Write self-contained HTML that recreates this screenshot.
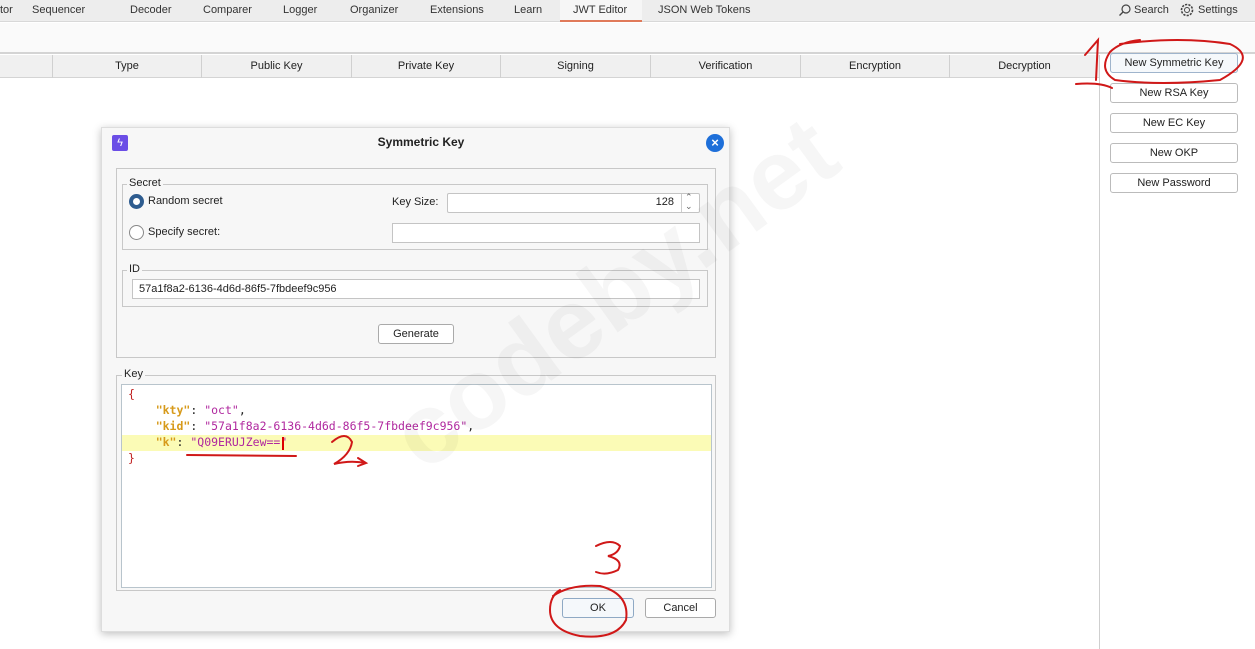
<!DOCTYPE html>
<html><head><meta charset="utf-8"><style>
*{box-sizing:border-box;margin:0;padding:0}
body{width:1255px;height:649px;position:relative;overflow:hidden;background:#fff;font-family:"Liberation Sans","DejaVu Sans",sans-serif;font-size:11px;color:#222}
.a{position:absolute}
.tab{position:absolute;top:0;height:21px;line-height:20px;font-size:11px;color:#333}
.th{position:absolute;top:55px;height:23px;line-height:23px;text-align:center;border-left:1px solid #d0d0d0;font-size:11px}
.btn{position:absolute;left:1110px;width:128px;height:20px;border:1px solid #bbb;border-radius:3px;background:#fff;text-align:center;line-height:18px;font-size:11px}
.grp{position:absolute;border:1px solid #c8c8c8}
.lbl{position:absolute;background:#f7f7f7;padding:0 2px;font-size:11px}
.in{position:absolute;border:1px solid #c4c4c4;background:#fff;border-radius:2px}
.mono{font-family:"DejaVu Sans Mono","Liberation Mono",monospace;font-size:11.5px}
</style></head><body>
<div class="a" style="left:0;top:0;width:1255px;height:22px;background:#ededed;border-bottom:1px solid #d8d8d8"></div>
<div class="tab" style="left:0">tor</div>
<div class="tab" style="left:32px">Sequencer</div>
<div class="tab" style="left:130px">Decoder</div>
<div class="tab" style="left:203px">Comparer</div>
<div class="tab" style="left:283px">Logger</div>
<div class="tab" style="left:350px">Organizer</div>
<div class="tab" style="left:430px">Extensions</div>
<div class="tab" style="left:514px">Learn</div>
<div class="a" style="left:560px;top:0;width:82px;height:22px;background:#f6f6f6;border-bottom:2px solid #e07a5a"></div>
<div class="tab" style="left:573px">JWT Editor</div>
<div class="tab" style="left:658px">JSON Web Tokens</div>
<svg class="a" style="left:1118px;top:3px" width="14" height="14"><circle cx="8" cy="6" r="4" fill="none" stroke="#444" stroke-width="1.2"/><path d="M5 9 L1.5 12.5" stroke="#444" stroke-width="1.3"/></svg>
<div class="tab" style="left:1134px">Search</div>
<svg class="a" style="left:1179px;top:2px" width="16" height="16"><circle cx="8" cy="8" r="2.5" fill="none" stroke="#444"/><circle cx="8" cy="8" r="5.5" fill="none" stroke="#444" stroke-dasharray="2.2 1.2" stroke-width="1.6"/></svg>
<div class="tab" style="left:1198px">Settings</div>
<div class="a" style="left:0;top:23px;width:1255px;height:31px;background:#fafafa;border-bottom:2px solid #d4d4d4"></div>
<div class="a" style="left:0;top:55px;width:1099px;height:23px;background:#f0f0f0;border-bottom:1px solid #d4d4d4"></div>
<div class="th" style="left:52px;width:149px">Type</div>
<div class="th" style="left:201px;width:150px">Public Key</div>
<div class="th" style="left:351px;width:149px">Private Key</div>
<div class="th" style="left:500px;width:150px">Signing</div>
<div class="th" style="left:650px;width:150px">Verification</div>
<div class="th" style="left:800px;width:149px">Encryption</div>
<div class="th" style="left:949px;width:150px">Decryption</div>
<div class="a" style="left:1099px;top:55px;width:1px;height:594px;background:#cfcfcf"></div>
<div class="btn" style="top:53px;border-color:#9fb4cc;background:#f5f8fb">New Symmetric Key</div>
<div class="btn" style="top:83px">New RSA Key</div>
<div class="btn" style="top:113px">New EC Key</div>
<div class="btn" style="top:143px">New OKP</div>
<div class="btn" style="top:173px">New Password</div>

<!-- dialog -->
<div class="a" style="left:101px;top:127px;width:629px;height:505px;background:#f7f7f7;border:1px solid #ddd;box-shadow:0 2px 8px rgba(0,0,0,.25)"></div>
<div class="a" style="left:112px;top:135px;width:16px;height:16px;background:#6b4ee6;border-radius:2px;color:#fff;font-size:11px;text-align:center;line-height:16px">ϟ</div>
<div class="a" style="left:101px;top:135px;width:640px;text-align:center;font-weight:bold;font-size:12px">Symmetric Key</div>
<div class="a" style="left:706px;top:134px;width:18px;height:18px;border-radius:50%;background:#1e6fd9;color:#fff;text-align:center;line-height:17px;font-weight:bold;font-size:13px">×</div>
<div class="grp" style="left:116px;top:168px;width:600px;height:190px"></div>
<div class="grp" style="left:122px;top:184px;width:586px;height:66px"></div>
<div class="lbl" style="left:127px;top:177px">Secret</div>
<div class="a" style="left:129px;top:194px;width:15px;height:15px;border-radius:50%;background:#2e5c8f"></div>
<div class="a" style="left:133px;top:198px;width:7px;height:7px;border-radius:50%;background:#fff"></div>
<div class="a" style="left:148px;top:195px">Random secret</div>
<div class="a" style="left:129px;top:225px;width:15px;height:15px;border-radius:50%;border:1px solid #888;background:#fff"></div>
<div class="a" style="left:148px;top:226px">Specify secret:</div>
<div class="a" style="left:392px;top:196px">Key Size:</div>
<div class="in" style="left:447px;top:193px;width:253px;height:20px"></div>
<div class="a" style="left:681px;top:194px;width:1px;height:18px;background:#ccc"></div>
<div class="a" style="left:600px;top:196px;width:74px;text-align:right">128</div>
<div class="a" style="left:685px;top:193px;font-size:9px;line-height:9px;color:#666">⌃<br>⌄</div>
<div class="in" style="left:392px;top:223px;width:308px;height:20px;border-radius:0"></div>
<div class="grp" style="left:122px;top:270px;width:586px;height:37px"></div>
<div class="lbl" style="left:127px;top:263px">ID</div>
<div class="in" style="left:132px;top:279px;width:568px;height:20px;border-radius:0"></div>
<div class="a" style="left:139px;top:283px">57a1f8a2-6136-4d6d-86f5-7fbdeef9c956</div>
<div class="a" style="left:378px;top:324px;width:76px;height:20px;border:1px solid #aaa;border-radius:3px;background:#fff;text-align:center;line-height:18px">Generate</div>
<div class="grp" style="left:116px;top:375px;width:600px;height:216px"></div>
<div class="lbl" style="left:122px;top:368px">Key</div>
<div class="a" style="left:121px;top:384px;width:591px;height:204px;background:#fff;border:1px solid #b8c4cc"></div>
<div class="a" style="left:122px;top:435px;width:589px;height:16px;background:#fbfbb6"></div>
<div class="a mono" style="left:128px;top:386px;line-height:16px;white-space:pre;color:#c02020">{
<span style="color:#222">    </span><b style="color:#d79a1a">"kty"</b><span style="color:#222">: </span><span style="color:#b0289f">"oct"</span><span style="color:#222">,</span>
<span>    </span><b style="color:#d79a1a">"kid"</b><span style="color:#222">: </span><span style="color:#b0289f">"57a1f8a2-6136-4d6d-86f5-7fbdeef9c956"</span><span style="color:#222">,</span>
<span>    </span><b style="color:#d79a1a">"k"</b><span style="color:#222">: </span><span style="color:#b0289f">"Q09ERUJZew=="</span>
}</div>
<div class="a" style="left:282px;top:437px;width:2px;height:13px;background:#d00"></div>
<div class="a" style="left:562px;top:598px;width:72px;height:20px;border:1px solid #8fa9c4;border-radius:3px;background:#f5f8fb;text-align:center;line-height:18px">OK</div>
<div class="a" style="left:645px;top:598px;width:71px;height:20px;border:1px solid #aaa;border-radius:3px;background:#fff;text-align:center;line-height:18px">Cancel</div>

<!-- watermark -->
<div class="a" style="left:370px;top:400px;font-size:100px;font-weight:bold;color:rgba(0,0,0,0.035);transform:rotate(-36deg);transform-origin:left top;white-space:nowrap">codeby.net</div>

<!-- annotations -->
<svg class="a" style="left:0;top:0" width="1255" height="649" fill="none" stroke="#d01818" stroke-width="2" stroke-linecap="round">
<path d="M1085 55 L1098 40 L1096 80 M1076 84 Q1100 82 1112 88"/>
<path d="M1120 44 Q1180 36 1230 44 Q1260 58 1220 80 Q1160 86 1115 80 Q1098 70 1110 52 Q1120 42 1140 40"/>
<path d="M187 455 L296 456"/>
<path d="M332 442 Q346 430 352 442 Q350 455 334 464 Q350 460 366 463 M358 458 L366 463 L358 466"/>
<path d="M596 546 Q612 538 620 546 Q618 554 608 556 Q624 560 618 570 Q606 576 596 572"/>
<path d="M553 596 Q570 584 600 586 Q630 594 626 620 Q616 640 580 636 Q550 630 550 610 Q550 596 560 590"/>
</svg>
</body></html>
